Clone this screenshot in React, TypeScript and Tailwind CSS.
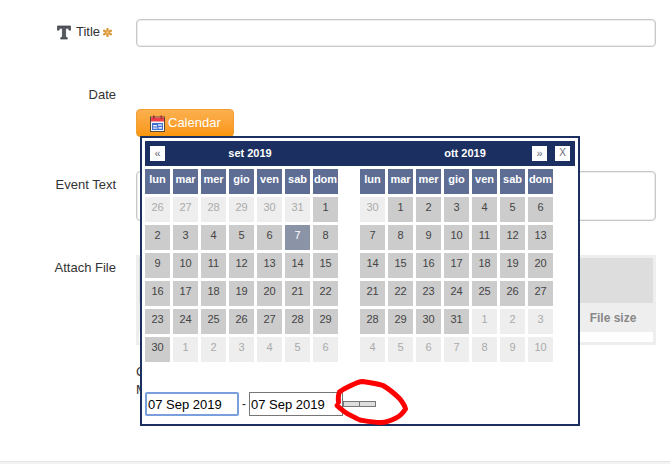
import React from "react";

const DAYS = ["lun", "mar", "mer", "gio", "ven", "sab", "dom"];

type Cell = { n: number; muted?: boolean; selected?: boolean };

function range(a: number, b: number, muted = false): Cell[] {
  const out: Cell[] = [];
  for (let i = a; i <= b; i++) out.push({ n: i, muted });
  return out;
}

const SEP: Cell[] = [
  ...range(26, 31, true),
  ...range(1, 6),
  { n: 7, selected: true },
  ...range(8, 30),
  ...range(1, 6, true),
];
const OCT: Cell[] = [
  ...range(30, 30, true),
  ...range(1, 31),
  ...range(1, 10, true),
];

function Month({ cells }: { cells: Cell[] }) {
  return (
    <div className="grid grid-cols-[repeat(7,25px)] auto-rows-[25px] gap-[3px] text-[11px] leading-[21px] text-center">
      {DAYS.map((d) => (
        <div key={d} className="bg-[#5d6d93] text-white font-bold whitespace-nowrap">
          {d}
        </div>
      ))}
      {cells.map((c, i) => (
        <div
          key={i}
          className={
            c.selected
              ? "bg-[#8b93a7] text-white"
              : c.muted
                ? "bg-[#eeeeee] text-[#aaaaaa]"
                : "bg-[#cccccc] text-[#444444]"
          }
        >
          {c.n}
        </div>
      ))}
    </div>
  );
}

function NavButton({ children, small }: { children: React.ReactNode; small?: boolean }) {
  return (
    <div
      className={`w-[15px] h-[15px] bg-white text-[#666a78] font-normal leading-[14px] text-center shrink-0 ${
        small ? "text-[10px]" : "text-[11px]"
      }`}
    >
      {children}
    </div>
  );
}

function TIcon() {
  return (
    <svg width="14" height="15" viewBox="0 0 15 16" className="shrink-0">
      <path
        d="M0.5 1 H14.5 V5.5 H13 L12 3.5 H9.2 V12.8 L11 13.5 V15 H4 V13.5 L5.8 12.8 V3.5 H3 L2 5.5 H0.5 Z"
        fill="#55585e"
        stroke="#33353a"
        strokeWidth="0.7"
      />
    </svg>
  );
}

function Star() {
  return (
    <svg width="9" height="9" viewBox="0 0 10 10" className="shrink-0">
      <g stroke="#dc9a3c" strokeWidth="2.6" strokeLinecap="round">
        <line x1="5" y1="1.2" x2="5" y2="8.8" />
        <line x1="1.2" y1="3" x2="8.8" y2="7" />
        <line x1="1.2" y1="7" x2="8.8" y2="3" />
      </g>
      <circle cx="5" cy="5" r="1.4" fill="#f7c46c" />
    </svg>
  );
}

function CalendarIcon() {
  return (
    <svg width="15" height="17" viewBox="0 0 15 17" className="shrink-0">
      <rect x="0.5" y="2" width="14" height="14.5" fill="#f4f6fa" stroke="#5a4a3a" />
      <rect x="1" y="2.5" width="13" height="4" fill="#ef3e46" />
      <rect x="3" y="0.5" width="1.6" height="3.5" fill="#a8302f" />
      <rect x="10.5" y="0.5" width="1.6" height="3.5" fill="#a8302f" />
      <rect x="2" y="8" width="11" height="7" fill="#3f6fd1" />
      <path d="M3 10 H7 V11.5 H3 Z M8 9.3 H12 V10.8 H8 Z M3 12.5 H7.5 V13.8 H3 Z M8.5 12 H12 V13.8 H8.5 Z" fill="#dfe8fb" />
    </svg>
  );
}

export default function App() {
  const label = "w-[116px] shrink-0 text-right leading-4";
  const field =
    "ml-5 w-[520px] rounded-[4px] border border-[#c8c8c8] shadow-[inset_0_0_0_1px_#ececec] bg-white";
  return (
    <div
      className="relative flex flex-col w-[670px] h-[464px] overflow-hidden bg-white text-[13px] text-[#333333] pt-[19px]"
      style={{ fontFamily: '"Liberation Sans", Arial, sans-serif' }}
    >
      <div className="flex">
        <div className={`${label} h-[26px] pr-[4px] flex justify-end items-center gap-[3px]`}>
          <span className="flex items-center gap-[5px]">
            <TIcon />
            <span>Title</span>
          </span>
          <Star />
        </div>
        <input className={`${field} h-[28px]`} />
      </div>

      <div className="flex mt-[40px]">
        <div className={label}>Date</div>
      </div>

      <div className="relative ml-[136px] mt-[6px] w-fit z-10">
        <div className="flex items-center gap-[3px] w-[98px] h-[28px] pl-[13px] rounded-[4px] border border-[#f0a030] bg-gradient-to-b from-[#fbb04e] to-[#fb9606] text-white text-[13px]">
          <CalendarIcon />
          <span>Calendar</span>
        </div>

        <div className="absolute left-[4px] top-[27px] w-[440px] h-[290px] border-2 border-[#1b3060] bg-white p-[3px]">
          <div className="flex items-center h-[25px] px-[5px] bg-[#1b3060] text-white font-bold text-[11px] mb-[3px]">
            <NavButton>«</NavButton>
            <div className="w-[170px] text-center">set 2019</div>
            <div className="w-[134px] ml-[63px] text-center">ott 2019</div>
            <NavButton>»</NavButton>
            <div className="ml-2">
              <NavButton small>X</NavButton>
            </div>
          </div>
          <div className="flex gap-[22px]">
            <Month cells={SEP} />
            <Month cells={OCT} />
          </div>
          <div className="flex items-center mt-[30px] text-black">
            <input
              defaultValue="07 Sep 2019"
              className="w-[94px] h-[24px] pl-[1px] border-2 border-[#7a9fdc] rounded-[2px] text-[13px] outline-none"
            />
            <span className="w-[10px] text-center text-[13px] text-[#333333]">-</span>
            <input
              defaultValue="07 Sep 2019"
              className="w-[94px] h-[24px] pl-[1px] border border-[#767676] text-[13px] outline-none"
            />
            <div className="flex">
              <div className="w-[17px] h-[6px] border border-[#777777] bg-[#dddddd]" />
              <div className="w-[16px] h-[6px] border border-l-0 border-[#777777] bg-[#dddddd]" />
            </div>
          </div>
        </div>
      </div>

      <div className="flex mt-[34px]">
        <div className={`${label} pt-[6px]`}>Event Text</div>
        <textarea className={`${field} h-[50px] resize-none`} />
      </div>

      <div className="flex mt-[34px]">
        <div className={`${label} pt-[5px]`}>Attach File</div>
        <div className="ml-5 w-[520px] h-[90px] bg-[#eeeeee] p-[3px] flex flex-col">
          <div className="h-[45px] bg-[#dddddd]" />
          <div className="h-[29px] flex justify-end items-center">
            <div className="w-[80px] text-center text-[12px] font-bold text-[#888888]">File size</div>
          </div>
          <div className="h-[10px] bg-white" />
        </div>
      </div>

      <div className="ml-[136px] mt-[18px] leading-[18px]">
        <div>C</div>
        <div>M</div>
      </div>

      <div className="mt-auto h-[3px] border-t border-[#e4e4e4] bg-[#f3f3f3]" />

      <svg
        className="absolute left-[330px] top-[375px] z-20"
        width="85"
        height="55"
        viewBox="0 0 85 55"
        fill="none"
      >
        <path
          d="M8.5 27 C8 22 8.5 19 9.5 17 C13 14 17 12.5 21 10.5 C25 8.5 29 6.5 32.5 6.5 C40 7.5 47 8.5 53 10.5 C59 14 65 19 70 24 C73 28 75 31 75.5 34 C73 38 70 41 66 43 C60 46 55 48 50 47.5 C44 47.5 36 46 30 45 C25 43 20 40 17 38.5 C13 36 10 33 7 30.5"
          stroke="#ff0000"
          strokeWidth="5"
          strokeLinecap="round"
          strokeLinejoin="round"
        />
      </svg>
    </div>
  );
}
